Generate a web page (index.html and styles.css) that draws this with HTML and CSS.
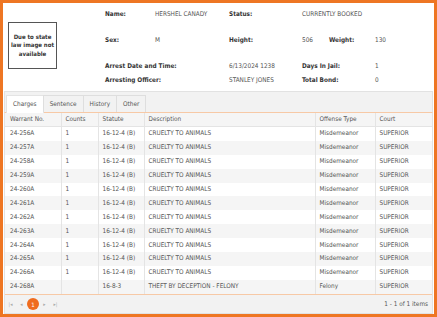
FILE: index.html
```html
<!DOCTYPE html>
<html>
<head>
  <title>Inmate Detail</title>
  <link rel="stylesheet" href="styles.css">
</head>
<body>
  <div class="window">
    <div class="summary">
      <div class="photo">
        <span>Due to state law image not available</span>
      </div>
      <div class="info">
        <div class="lbl">Name:</div>
        <div class="val">HERSHEL CANADY</div>
        <div class="lbl">Status:</div>
        <div class="val wide">CURRENTLY BOOKED</div>

        <div class="lbl">Sex:</div>
        <div class="val">M</div>
        <div class="lbl">Height:</div>
        <div class="val">506</div>
        <div class="lbl">Weight:</div>
        <div class="val">130</div>

        <div class="lbl span2">Arrest Date and Time:</div>
        <div class="val">6/13/2024 1238</div>
        <div class="lbl span2">Days In Jail:</div>
        <div class="val">1</div>

        <div class="lbl span2">Arresting Officer:</div>
        <div class="val">STANLEY JONES</div>
        <div class="lbl span2">Total Bond:</div>
        <div class="val">0</div>
      </div>
    </div>

    <div class="tabstrip">
      <ul class="tabs">
        <li class="active">Charges</li>
        <li>Sentence</li>
        <li>History</li>
        <li>Other</li>
      </ul>
    </div>

    <div class="grid">
      <table>
        <colgroup>
          <col style="width: 56px">
          <col style="width: 37px">
          <col style="width: 46px">
          <col style="width: 171px">
          <col style="width: 60px">
          <col>
        </colgroup>
        <thead>
          <tr>
            <th>Warrant No.</th>
            <th>Counts</th>
            <th>Statute</th>
            <th>Description</th>
            <th>Offense Type</th>
            <th>Court</th>
          </tr>
        </thead>
        <tbody>
          <tr><td>24-256A</td><td>1</td><td>16-12-4 (B)</td><td>CRUELTY TO ANIMALS</td><td>Misdemeanor</td><td>SUPERIOR</td></tr>
          <tr class="alt"><td>24-257A</td><td>1</td><td>16-12-4 (B)</td><td>CRUELTY TO ANIMALS</td><td>Misdemeanor</td><td>SUPERIOR</td></tr>
          <tr><td>24-258A</td><td>1</td><td>16-12-4 (B)</td><td>CRUELTY TO ANIMALS</td><td>Misdemeanor</td><td>SUPERIOR</td></tr>
          <tr class="alt"><td>24-259A</td><td>1</td><td>16-12-4 (B)</td><td>CRUELTY TO ANIMALS</td><td>Misdemeanor</td><td>SUPERIOR</td></tr>
          <tr><td>24-260A</td><td>1</td><td>16-12-4 (B)</td><td>CRUELTY TO ANIMALS</td><td>Misdemeanor</td><td>SUPERIOR</td></tr>
          <tr class="alt"><td>24-261A</td><td>1</td><td>16-12-4 (B)</td><td>CRUELTY TO ANIMALS</td><td>Misdemeanor</td><td>SUPERIOR</td></tr>
          <tr><td>24-262A</td><td>1</td><td>16-12-4 (B)</td><td>CRUELTY TO ANIMALS</td><td>Misdemeanor</td><td>SUPERIOR</td></tr>
          <tr class="alt"><td>24-263A</td><td>1</td><td>16-12-4 (B)</td><td>CRUELTY TO ANIMALS</td><td>Misdemeanor</td><td>SUPERIOR</td></tr>
          <tr><td>24-264A</td><td>1</td><td>16-12-4 (B)</td><td>CRUELTY TO ANIMALS</td><td>Misdemeanor</td><td>SUPERIOR</td></tr>
          <tr class="alt"><td>24-265A</td><td>1</td><td>16-12-4 (B)</td><td>CRUELTY TO ANIMALS</td><td>Misdemeanor</td><td>SUPERIOR</td></tr>
          <tr><td>24-266A</td><td>1</td><td>16-12-4 (B)</td><td>CRUELTY TO ANIMALS</td><td>Misdemeanor</td><td>SUPERIOR</td></tr>
          <tr class="alt"><td>24-268A</td><td></td><td>16-8-3</td><td>THEFT BY DECEPTION - FELONY</td><td>Felony</td><td>SUPERIOR</td></tr>
        </tbody>
      </table>

      <div class="pager">
        <div class="pager-nav">
          <span class="arrow">&#124;&#9666;</span>
          <span class="arrow">&#9666;</span>
          <span class="page current">1</span>
          <span class="arrow">&#9656;</span>
          <span class="arrow">&#9656;&#124;</span>
        </div>
        <div class="pager-info">1 - 1 of 1 items</div>
      </div>
    </div>
  </div>
</body>
</html>
```

FILE: styles.css
```css
    html, body {
      margin: 0;
      padding: 0;
    }
    body {
      width: 437px;
      height: 317px;
      font-family: "DejaVu Sans Condensed", "DejaVu Sans", Verdana, sans-serif;
      font-stretch: condensed;
      font-size: 6.4px;
      color: #555;
      background: white;
    }
    .window {
      box-sizing: border-box;
      width: 437px;
      height: 317px;
      border: 3px solid #ee7623;
      display: flex;
      flex-direction: column;
      padding: 0 1px;
    }

    /* Summary Section */
    .summary {
      display: flex;
      height: 88px;
    }
    .photo {
      box-sizing: border-box;
      width: 49px;
      height: 47px;
      margin: 19px 0 0 4px;
      border: 1px solid #555;
      display: flex;
      align-items: center;
      justify-content: center;
      text-align: center;
      padding: 0 1px;
      font-weight: bold;
      font-size: 6px;
      line-height: 8.5px;
      color: #333;
    }
    .info {
      margin: 4px 0 0 48px;
      display: grid;
      grid-template-columns: 50px 74px 73px 27px 46px 40px;
      grid-template-rows: 26px 26px 14px 14px;
      align-items: start;
      line-height: 14px;
    }
    .lbl {
      font-weight: bold;
      color: #333;
    }
    .val {
      color: #555;
    }
    .span2 {
      grid-column: span 2;
    }
    .wide {
      grid-column: span 3;
    }

    /* Tabs */
    .tabstrip {
      background: #f2f2f2;
      border: 1px solid #e2e2e2;
      border-bottom: 1px solid #f7c9a6;
      height: 20px;
      display: flex;
      align-items: flex-end;
    }
    .tabs {
      list-style: none;
      margin: 0 0 0 1px;
      padding: 0;
      display: flex;
    }
    .tabs li {
      box-sizing: border-box;
      height: 17px;
      line-height: 16px;
      padding: 0 6px;
      border: 1px solid #dedede;
      border-bottom: none;
      margin-right: -1px;
      color: #555;
      background: #f2f2f2;
    }
    .tabs li.active {
      background: white;
      height: 18px;
      margin-bottom: -1px;
      border-color: #e4e4e4;
    }

    /* Grid */
    .grid {
      flex: 1;
      display: flex;
      flex-direction: column;
      border: 1px solid #e2e2e2;
      border-top: none;
    }
    table {
      border-collapse: collapse;
      width: 100%;
      table-layout: fixed;
    }
    th, td {
      text-align: left;
      padding: 0 4px;
      height: 13.9px;
      line-height: 13px;
      white-space: nowrap;
      overflow: hidden;
      border-left: 1px solid #e4e4e4;
      font-weight: normal;
      color: #555;
    }
    th:first-child, td:first-child {
      border-left: none;
      padding-left: 5px;
    }
    th {
      background: #f5f5f5;
      height: 13px;
      border-bottom: 1px solid #e4e4e4;
    }
    tr.alt td {
      background: #f5f5f5;
    }

    /* Pager */
    .pager {
      margin-top: auto;
      border-top: 1px solid #f7c9a6;
      background: #f2f2f2;
      height: 18px;
      display: flex;
      align-items: center;
      justify-content: space-between;
      padding: 0 4px 0 0;
    }
    .pager-nav {
      display: flex;
      align-items: center;
    }
    .arrow {
      width: 11px;
      text-align: center;
      font-size: 5px;
      color: #aaa;
    }
    .page {
      width: 12px;
      height: 12px;
      border-radius: 50%;
      display: flex;
      align-items: center;
      justify-content: center;
      font-size: 6px;
    }
    .page.current {
      background: #ef6c1f;
      color: white;
    }
    .pager-info {
      color: #555;
    }
```
